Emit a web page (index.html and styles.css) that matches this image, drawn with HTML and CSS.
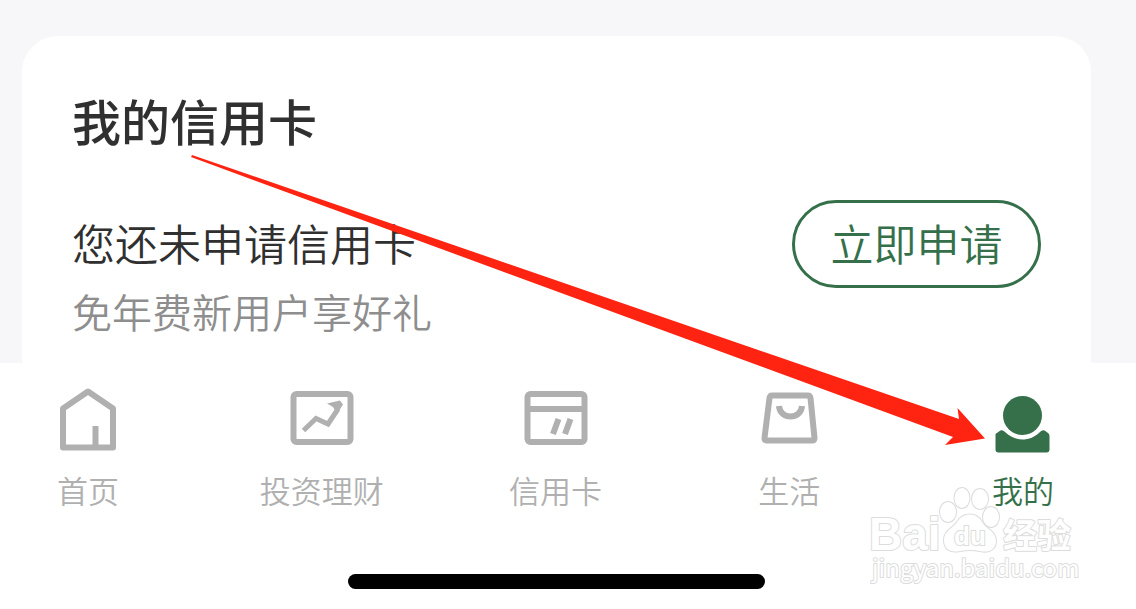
FILE: index.html
```html
<!DOCTYPE html>
<html lang="zh-CN">
<head>
<meta charset="utf-8">
<meta name="viewport" content="width=device-width, initial-scale=1">
<title>我的信用卡</title>
<link rel="stylesheet" href="styles.css">
</head>
<body>
<div class="screen">
  <main class="content">
    <section class="card">
      <h1 class="card-title">我的信用卡</h1>
      <div class="card-row">
        <div class="card-text">
          <p class="card-lead">您还未申请信用卡</p>
          <p class="card-sub">免年费新用户享好礼</p>
        </div>
        <button class="apply" type="button">立即申请</button>
      </div>
    </section>
  </main>

  <nav class="tabs">
    <a class="tab" href="#home">
      <svg class="tab-icon" viewBox="0 0 70 70" fill="none" stroke="currentColor" stroke-width="6" stroke-linejoin="round">
        <path d="M10 22.500 35 5.500 60 22.500V61.500H10ZM42.500 61V40"/>
      </svg>
      <span>首页</span>
    </a>
    <a class="tab" href="#invest">
      <svg class="tab-icon" viewBox="0 0 70 70" fill="none" stroke="currentColor" stroke-width="6">
        <rect x="6.500" y="8" width="57" height="48" rx="3"/>
        <path stroke-width="5" d="M16.500 44.500 29 32.500 41 38 51 23"/>
        <path fill="currentColor" stroke="none" d="M40 17.500 53 14.500 56 18.500 50 28 46 21Z"/>
      </svg>
      <span>投资理财</span>
    </a>
    <a class="tab" href="#card">
      <svg class="tab-icon" viewBox="0 0 70 70" fill="none" stroke="currentColor" stroke-width="6">
        <rect x="6.500" y="8" width="57" height="48" rx="3"/>
        <path d="M6 23H63M37.500 33 32 48M49.500 33 44 48"/>
      </svg>
      <span>信用卡</span>
    </a>
    <a class="tab" href="#life">
      <svg class="tab-icon" viewBox="0 0 70 70" fill="none" stroke="currentColor" stroke-width="6">
        <path stroke-linejoin="round" d="M18 9.500H54Q56 9.500 56.500 12L60.500 52Q60.500 54.500 58 54.500H13Q10.500 54.500 10.500 52L15.500 12Q16 9.500 18 9.500Z"/>
        <path d="M25 20C26 34 47 34 48 20"/>
      </svg>
      <span>生活</span>
    </a>
    <a class="tab tab-active" href="#mine" aria-current="page">
      <svg class="tab-icon" viewBox="0 0 70 70" fill="currentColor">
        <circle cx="34.500" cy="29.500" r="19.500"/>
        <path d="M7.500 48 11 45.500Q14 43 17 46C27 56 42 56 52 46Q55 43 58 45.500L60 47Q61.500 48 61.500 50V63.500Q61.500 66.500 58.500 66.500H10.500Q7.500 66.500 7.500 63.500Z"/>
      </svg>
      <span>我的</span>
    </a>
  </nav>
  <div class="home-bar"></div>

  <svg class="watermark" viewBox="0 0 220 110" aria-hidden="true">
    <g class="mark-shape">
      <ellipse cx="78" cy="32" rx="8" ry="10"/>
      <ellipse cx="92" cy="18" rx="7.500" ry="10"/>
      <ellipse cx="110" cy="19" rx="8" ry="10"/>
      <ellipse cx="121" cy="37" rx="8" ry="10"/>
      <path d="M74 60C74 51 81 50 87 42C93 32 107 32 112 42C117 50 126 51 126 61C126 70 118 73 110 71Q100 69 90 71C80 73 74 69 74 60Z"/>
    </g>
    <text class="mark-text mark-bai" x="-1" y="70">Bai</text>
    <text class="mark-text mark-du" x="84" y="65">du</text>
    <text class="mark-text mark-cn" x="133" y="68">经验</text>
    <text class="mark-text mark-url" x="2" y="97">jingyan.baidu.com</text>
  </svg>

  <svg class="arrow" viewBox="0 0 794 291" aria-hidden="true">
    <path d="M1 0 768 264 766.500 253 794 283.500 754 290 762 282 0 2Z"/>
  </svg>
</div>
</body>
</html>
```

FILE: styles.css
```css
* {
  box-sizing: border-box;
}

body {
  margin: 0;
  background: #fff;
  font-family: "Noto Sans CJK SC", "Noto Sans", sans-serif;
}

.screen {
  position: relative;
}

.content {
  padding: 36px 45px 0 22px;
  background: #f7f7fa;
}

.card {
  padding: 48px 50px 24px;
  border-radius: 36px 36px 0 0;
  background: #fff;
}

.card-title {
  margin: 0 0 44px;
  color: #303030;
  font-size: 49px;
  font-weight: 500;
  line-height: 72px;
}

.card-row {
  display: flex;
  align-items: flex-start;
  justify-content: space-between;
}

.card-text p {
  margin: 0;
}

.card-lead {
  color: #303030;
  font-size: 43px;
  font-weight: 350;
  line-height: 84px;
}

.card-sub {
  color: #8e8e8e;
  font-size: 40px;
  font-weight: 350;
  line-height: 55px;
}

.apply {
  width: 249px;
  height: 88px;
  padding: 0 0 4px;
  border: 3px solid #35704a;
  border-radius: 44px;
  background: #fff;
  color: #35704a;
  font: 350 43px/76px "Noto Sans CJK SC", sans-serif;
}

.tabs {
  display: flex;
  justify-content: space-between;
  padding: 23px 50px 0 25px;
}

.tab {
  display: flex;
  flex-direction: column;
  align-items: center;
  width: 126px;
  color: #b0b0b0;
  font-size: 31px;
  font-weight: 350;
  line-height: 44px;
  text-decoration: none;
  white-space: nowrap;
}

.tab-active {
  color: #35704a;
}

.tab-icon {
  width: 70px;
  height: 70px;
  margin-bottom: 12px;
}

.home-bar {
  width: 417px;
  height: 15px;
  margin: 62px auto 20px;
  border-radius: 8px;
  background: #000;
  translate: -12px;
}

.watermark {
  position: absolute;
  top: 480px;
  right: 46px;
  width: 220px;
  height: 110px;
}

.mark-shape,
.mark-text {
  fill: #fff;
  stroke: #dcdcdc;
  stroke-width: 2px;
  stroke-linejoin: round;
  paint-order: stroke;
}

.mark-bai {
  font: 700 46px "Liberation Sans", sans-serif;
}

.mark-du {
  font: 700 26px "Liberation Sans", sans-serif;
}

.mark-cn {
  font: 700 34px "Noto Sans CJK SC", sans-serif;
}

.mark-url {
  font: 400 24px "Noto Sans CJK SC", sans-serif;
}

.arrow {
  position: absolute;
  top: 155px;
  left: 191px;
  width: 794px;
  height: 291px;
  fill: #ff2312;
  pointer-events: none;
}
```
